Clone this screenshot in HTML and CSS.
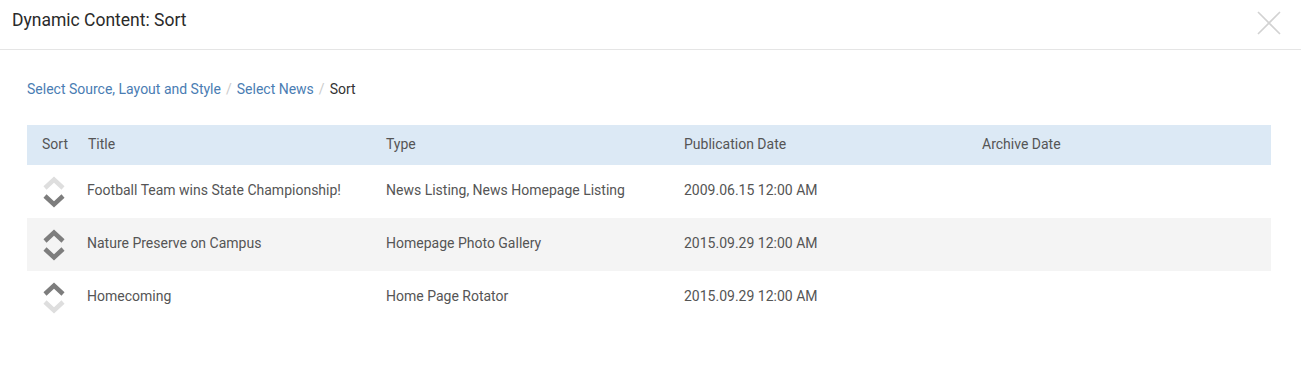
FILE: index.html
```html
<!DOCTYPE html>
<html>
<head>
<meta charset="utf-8">
<link rel="stylesheet" href="styles.css">
</head>
<body>
<div class="modal">
  <div class="modal-header">
    <h4 class="modal-title">Dynamic Content: Sort</h4>
    <button class="close" aria-label="Close">
      <svg width="26" height="26" viewBox="0 0 26 26"><path d="M2 2 L24 24 M24 2 L2 24" stroke="#d2d2d2" stroke-width="1.6" fill="none"/></svg>
    </button>
  </div>
  <div class="modal-body">
    <ol class="breadcrumb">
      <li><a href="#">Select Source, Layout and Style</a></li>
      <li class="sep">/</li>
      <li><a href="#">Select News</a></li>
      <li class="sep">/</li>
      <li class="active">Sort</li>
    </ol>
    <table class="grid">
      <colgroup>
        <col class="c-sort"><col class="c-main"><col class="c-main"><col class="c-main"><col>
      </colgroup>
      <thead>
        <tr><th>Sort</th><th>Title</th><th>Type</th><th>Publication Date</th><th>Archive Date</th></tr>
      </thead>
      <tbody>
        <tr>
          <td class="sort"><span class="arrows"><svg class="up off" viewBox="0 0 24 14"><path d="M3 12 L12 3.5 L21 12"/></svg><svg class="down" viewBox="0 0 24 14"><path d="M3 2 L12 10.5 L21 2"/></svg></span></td>
          <td class="title">Football Team wins State Championship!</td>
          <td>News Listing, News Homepage Listing</td>
          <td>2009.06.15 12:00 AM</td>
          <td></td>
        </tr>
        <tr class="alt">
          <td class="sort"><span class="arrows"><svg class="up" viewBox="0 0 24 14"><path d="M3 12 L12 3.5 L21 12"/></svg><svg class="down" viewBox="0 0 24 14"><path d="M3 2 L12 10.5 L21 2"/></svg></span></td>
          <td class="title">Nature Preserve on Campus</td>
          <td>Homepage Photo Gallery</td>
          <td>2015.09.29 12:00 AM</td>
          <td></td>
        </tr>
        <tr>
          <td class="sort"><span class="arrows"><svg class="up" viewBox="0 0 24 14"><path d="M3 12 L12 3.5 L21 12"/></svg><svg class="down off" viewBox="0 0 24 14"><path d="M3 2 L12 10.5 L21 2"/></svg></span></td>
          <td class="title">Homecoming</td>
          <td>Home Page Rotator</td>
          <td>2015.09.29 12:00 AM</td>
          <td></td>
        </tr>
      </tbody>
    </table>
  </div>
</div>
</body>
</html>
```

FILE: styles.css
```css
* { box-sizing: border-box; }
html, body { margin: 0; padding: 0; background: #fff; }
body {
  font-family: Roboto, "Liberation Sans", Arial, sans-serif;
  font-size: 14px;
  color: #555;
}
.modal { width: 1301px; }
.modal-header {
  height: 50px;
  border-bottom: 1px solid #e5e5e5;
  display: flex;
  align-items: flex-start;
  justify-content: space-between;
  padding: 0 19px 0 12px;
}
.modal-title {
  margin: 9px 0 0;
  font-size: 17.5px;
  font-weight: 400;
  color: #2a2a2a;
  line-height: 22px;
}
.close {
  border: 0;
  background: none;
  padding: 0;
  margin-top: 10px;
  width: 26px;
  height: 26px;
  display: block;
}
.close svg { display: block; }
.modal-body { padding: 30px 30px 0 27px; }
.breadcrumb {
  list-style: none;
  margin: 0 0 27px;
  padding: 0;
  display: flex;
  gap: 5px;
  line-height: 18px;
}
.breadcrumb a { color: #4a7db3; text-decoration: none; }
.breadcrumb .sep { color: #ccc; }
.breadcrumb .active { color: #333; }
.grid {
  width: 1244px;
  border-collapse: collapse;
  table-layout: fixed;
}
.c-sort { width: 46px; }
.c-main { width: 298px; }
.grid th {
  background: #dce9f5;
  font-weight: 400;
  text-align: left;
  height: 40px;
  padding: 0 15px 2px;
  color: #555;
}
.grid td {
  height: 53px;
  padding: 0 15px 4px 15px;
  vertical-align: middle;
}
.grid td.title { padding-left: 14px; }
.grid tr.alt td { background: #f4f4f4; }
.grid td.sort { padding: 0 0 0 15px; }
.arrows {
  display: flex;
  flex-direction: column;
  width: 24px;
  gap: 4px;
}
.arrows svg { width: 24px; height: 14px; display: block; }
.arrows path { fill: none; stroke: #7d7d7d; stroke-width: 4.5; }
.arrows .off path { stroke: #dedede; }
```
